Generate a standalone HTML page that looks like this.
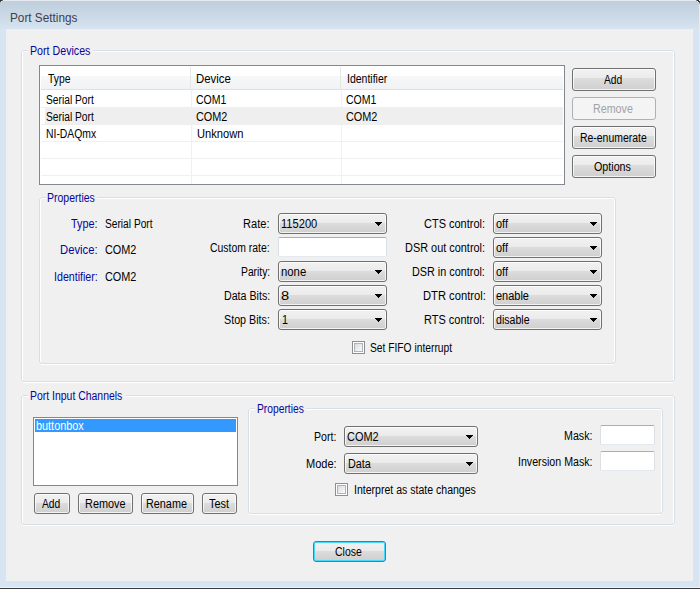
<!DOCTYPE html>
<html><head><meta charset="utf-8">
<style>
*{margin:0;padding:0;box-sizing:border-box}
html,body{width:700px;height:589px;overflow:hidden;background:#d7e4f1}
body{position:relative;font-family:"Liberation Sans",sans-serif;font-size:12px;color:#000}
.a{position:absolute}
.t{position:absolute;white-space:nowrap;transform-origin:0 0}
.btn{position:absolute;border:1px solid #707070;border-radius:3px;background:linear-gradient(#f2f2f2 0%,#ebebeb 45%,#dddddd 45%,#cfcfcf 100%);box-shadow:inset 0 0 0 1px rgba(255,255,255,.75)}
.btn.dis{border-color:#adb2b5;background:#f4f4f4;box-shadow:none}
.btn.def{border-color:#3c7fb1;box-shadow:inset 0 0 0 1px #48d8fb}
.cmb{position:absolute;border:1px solid #707070;border-radius:3px;background:linear-gradient(#f2f2f2 0%,#ebebeb 45%,#dddddd 45%,#cfcfcf 100%);box-shadow:inset 0 0 0 1px rgba(255,255,255,.75)}
.cmb .ar{position:absolute;right:4px;top:8px;width:0;height:0;border-left:3.5px solid transparent;border-right:3.5px solid transparent;border-top:4px solid #000}
.tb{position:absolute;background:#fff;border:1px solid #dbdfe6;border-top-color:#abadb3;border-bottom-color:#e3e9ef;border-radius:2px}
.chk{position:absolute;width:13px;height:13px;border:1px solid #8e8f8f;background:#fff}
.chk i{position:absolute;left:1px;top:1px;width:9px;height:9px;border:1px solid #aeb3b9;background:linear-gradient(135deg,#d8dbe1,#fbfbfb)}
</style></head><body>
<div class="a" style="left:0px;top:0px;width:700px;height:1px;background:#e6e9ef;"></div>
<div class="a" style="left:0px;top:1px;width:699px;height:28px;background:linear-gradient(#bfcedc,#d6e3f0);"></div>
<div class="a" style="left:699px;top:0px;width:1px;height:588px;background:#e8ebf0;"></div>
<div class="a" style="left:0px;top:587px;width:700px;height:1px;background:#eef4fc;"></div>
<div class="a" style="left:0px;top:588px;width:700px;height:1px;background:#3b3b3b;"></div>
<div class="a" style="left:0px;top:0px;width:2px;height:1px;background:#333;"></div>
<div class="a" style="left:2px;top:0px;width:1px;height:1px;background:#777;"></div>
<div class="a" style="left:0px;top:1px;width:1px;height:1px;background:#444;"></div>
<div class="a" style="left:0px;top:2px;width:1px;height:1px;background:#bbb;"></div>
<div class="a" style="left:1px;top:1px;width:1px;height:1px;background:#dde8f2;"></div>
<div class="a" style="left:696px;top:0px;width:1px;height:1px;background:#888;"></div>
<div class="a" style="left:697px;top:0px;width:2px;height:1px;background:#333;"></div>
<div class="a" style="left:699px;top:0px;width:1px;height:1px;background:#eee;"></div>
<div class="a" style="left:698px;top:1px;width:2px;height:1px;background:#333;"></div>
<div class="a" style="left:699px;top:2px;width:1px;height:1px;background:#555;"></div>
<div class="a" style="left:699px;top:3px;width:1px;height:1px;background:#aaa;"></div>
<div class="a" style="left:697px;top:1px;width:1px;height:1px;background:#dde8f2;"></div>
<div class="a" style="left:698px;top:2px;width:1px;height:1px;background:#dde8f2;"></div>
<div class="a" style="left:6px;top:29px;width:687px;height:552px;background:#f0f0f0;"></div>
<div class="a" style="left:21px;top:52px;width:1px;height:328px;background:#d5dfe5;"></div>
<div class="a" style="left:22px;top:52px;width:1px;height:328px;background:#ffffff;"></div>
<div class="a" style="left:673px;top:52px;width:1px;height:328px;background:#ffffff;"></div>
<div class="a" style="left:674px;top:52px;width:1px;height:328px;background:#d5dfe5;"></div>
<div class="a" style="left:23px;top:50px;width:650px;height:1px;background:#d5dfe5;"></div>
<div class="a" style="left:23px;top:51px;width:650px;height:1px;background:#ffffff;"></div>
<div class="a" style="left:23px;top:381px;width:650px;height:1px;background:#d5dfe5;"></div>
<div class="a" style="left:23px;top:382px;width:650px;height:1px;background:#ffffff;"></div>
<div class="a" style="left:22px;top:51px;width:1px;height:1px;background:#d5dfe5;"></div>
<div class="a" style="left:673px;top:51px;width:1px;height:1px;background:#d5dfe5;"></div>
<div class="a" style="left:22px;top:380px;width:1px;height:1px;background:#d5dfe5;"></div>
<div class="a" style="left:673px;top:380px;width:1px;height:1px;background:#d5dfe5;"></div>
<div class="a" style="left:28px;top:48px;width:65px;height:6px;background:#f0f0f0;"></div>
<div class="a" style="left:39px;top:65px;width:526px;height:120px;border:1px solid #828790;background:#fff"></div>
<div class="a" style="left:41px;top:76px;width:522px;height:13px;background:linear-gradient(#f7f8fa,#f1f2f4);"></div>
<div class="a" style="left:41px;top:89px;width:522px;height:1px;background:#dfe0e2;"></div>
<div class="a" style="left:190px;top:67px;width:1px;height:22px;background:#e6e6e8;"></div>
<div class="a" style="left:340px;top:67px;width:1px;height:22px;background:#e6e6e8;"></div>
<div class="a" style="left:45px;top:107px;width:518px;height:18px;background:#efefef;"></div>
<div class="a" style="left:41px;top:107px;width:4px;height:1px;background:#f0f0f0;"></div>
<div class="a" style="left:41px;top:124px;width:4px;height:1px;background:#f0f0f0;"></div>
<div class="a" style="left:41px;top:141px;width:522px;height:1px;background:#f0f0f0;"></div>
<div class="a" style="left:41px;top:158px;width:522px;height:1px;background:#f0f0f0;"></div>
<div class="a" style="left:41px;top:175px;width:522px;height:1px;background:#f0f0f0;"></div>
<div class="a" style="left:191px;top:90px;width:1px;height:94px;background:#f0f0f0;"></div>
<div class="a" style="left:341px;top:90px;width:1px;height:94px;background:#f0f0f0;"></div>
<div class="btn" style="left:572px;top:68px;width:84px;height:23px"></div>
<div class="btn dis" style="left:572px;top:97px;width:84px;height:23px"></div>
<div class="btn" style="left:572px;top:126px;width:84px;height:23px"></div>
<div class="btn" style="left:572px;top:155px;width:84px;height:23px"></div>
<div class="a" style="left:39px;top:199px;width:1px;height:163px;background:#d5dfe5;"></div>
<div class="a" style="left:40px;top:199px;width:1px;height:163px;background:#ffffff;"></div>
<div class="a" style="left:614px;top:199px;width:1px;height:163px;background:#ffffff;"></div>
<div class="a" style="left:615px;top:199px;width:1px;height:163px;background:#d5dfe5;"></div>
<div class="a" style="left:41px;top:197px;width:573px;height:1px;background:#d5dfe5;"></div>
<div class="a" style="left:41px;top:198px;width:573px;height:1px;background:#ffffff;"></div>
<div class="a" style="left:41px;top:363px;width:573px;height:1px;background:#d5dfe5;"></div>
<div class="a" style="left:41px;top:364px;width:573px;height:1px;background:#ffffff;"></div>
<div class="a" style="left:40px;top:198px;width:1px;height:1px;background:#d5dfe5;"></div>
<div class="a" style="left:614px;top:198px;width:1px;height:1px;background:#d5dfe5;"></div>
<div class="a" style="left:40px;top:362px;width:1px;height:1px;background:#d5dfe5;"></div>
<div class="a" style="left:614px;top:362px;width:1px;height:1px;background:#d5dfe5;"></div>
<div class="a" style="left:46px;top:195px;width:51px;height:6px;background:#f0f0f0;"></div>
<div class="cmb" style="left:278px;top:213px;width:109px;height:21px"></div>
<div class="a" style="left:375px;top:222px;width:7px;height:1px;background:#000;"></div>
<div class="a" style="left:376px;top:223px;width:5px;height:1px;background:#000;"></div>
<div class="a" style="left:377px;top:224px;width:3px;height:1px;background:#000;"></div>
<div class="a" style="left:378px;top:225px;width:1px;height:1px;background:#000;"></div>
<div class="cmb" style="left:493px;top:213px;width:109px;height:21px"></div>
<div class="a" style="left:590px;top:222px;width:7px;height:1px;background:#000;"></div>
<div class="a" style="left:591px;top:223px;width:5px;height:1px;background:#000;"></div>
<div class="a" style="left:592px;top:224px;width:3px;height:1px;background:#000;"></div>
<div class="a" style="left:593px;top:225px;width:1px;height:1px;background:#000;"></div>
<div class="tb" style="left:278px;top:237px;width:109px;height:20px"></div>
<div class="cmb" style="left:493px;top:237px;width:109px;height:21px"></div>
<div class="a" style="left:590px;top:246px;width:7px;height:1px;background:#000;"></div>
<div class="a" style="left:591px;top:247px;width:5px;height:1px;background:#000;"></div>
<div class="a" style="left:592px;top:248px;width:3px;height:1px;background:#000;"></div>
<div class="a" style="left:593px;top:249px;width:1px;height:1px;background:#000;"></div>
<div class="cmb" style="left:278px;top:261px;width:109px;height:21px"></div>
<div class="a" style="left:375px;top:270px;width:7px;height:1px;background:#000;"></div>
<div class="a" style="left:376px;top:271px;width:5px;height:1px;background:#000;"></div>
<div class="a" style="left:377px;top:272px;width:3px;height:1px;background:#000;"></div>
<div class="a" style="left:378px;top:273px;width:1px;height:1px;background:#000;"></div>
<div class="cmb" style="left:493px;top:261px;width:109px;height:21px"></div>
<div class="a" style="left:590px;top:270px;width:7px;height:1px;background:#000;"></div>
<div class="a" style="left:591px;top:271px;width:5px;height:1px;background:#000;"></div>
<div class="a" style="left:592px;top:272px;width:3px;height:1px;background:#000;"></div>
<div class="a" style="left:593px;top:273px;width:1px;height:1px;background:#000;"></div>
<div class="cmb" style="left:278px;top:285px;width:109px;height:21px"></div>
<div class="a" style="left:375px;top:294px;width:7px;height:1px;background:#000;"></div>
<div class="a" style="left:376px;top:295px;width:5px;height:1px;background:#000;"></div>
<div class="a" style="left:377px;top:296px;width:3px;height:1px;background:#000;"></div>
<div class="a" style="left:378px;top:297px;width:1px;height:1px;background:#000;"></div>
<div class="cmb" style="left:493px;top:285px;width:109px;height:21px"></div>
<div class="a" style="left:590px;top:294px;width:7px;height:1px;background:#000;"></div>
<div class="a" style="left:591px;top:295px;width:5px;height:1px;background:#000;"></div>
<div class="a" style="left:592px;top:296px;width:3px;height:1px;background:#000;"></div>
<div class="a" style="left:593px;top:297px;width:1px;height:1px;background:#000;"></div>
<div class="cmb" style="left:278px;top:309px;width:109px;height:21px"></div>
<div class="a" style="left:375px;top:318px;width:7px;height:1px;background:#000;"></div>
<div class="a" style="left:376px;top:319px;width:5px;height:1px;background:#000;"></div>
<div class="a" style="left:377px;top:320px;width:3px;height:1px;background:#000;"></div>
<div class="a" style="left:378px;top:321px;width:1px;height:1px;background:#000;"></div>
<div class="cmb" style="left:493px;top:309px;width:109px;height:21px"></div>
<div class="a" style="left:590px;top:318px;width:7px;height:1px;background:#000;"></div>
<div class="a" style="left:591px;top:319px;width:5px;height:1px;background:#000;"></div>
<div class="a" style="left:592px;top:320px;width:3px;height:1px;background:#000;"></div>
<div class="a" style="left:593px;top:321px;width:1px;height:1px;background:#000;"></div>
<div class="chk" style="left:352px;top:341px"><i></i></div>
<div class="a" style="left:21px;top:397px;width:1px;height:126px;background:#d5dfe5;"></div>
<div class="a" style="left:22px;top:397px;width:1px;height:126px;background:#ffffff;"></div>
<div class="a" style="left:673px;top:397px;width:1px;height:126px;background:#ffffff;"></div>
<div class="a" style="left:674px;top:397px;width:1px;height:126px;background:#d5dfe5;"></div>
<div class="a" style="left:23px;top:395px;width:650px;height:1px;background:#d5dfe5;"></div>
<div class="a" style="left:23px;top:396px;width:650px;height:1px;background:#ffffff;"></div>
<div class="a" style="left:23px;top:524px;width:650px;height:1px;background:#d5dfe5;"></div>
<div class="a" style="left:23px;top:525px;width:650px;height:1px;background:#ffffff;"></div>
<div class="a" style="left:22px;top:396px;width:1px;height:1px;background:#d5dfe5;"></div>
<div class="a" style="left:673px;top:396px;width:1px;height:1px;background:#d5dfe5;"></div>
<div class="a" style="left:22px;top:523px;width:1px;height:1px;background:#d5dfe5;"></div>
<div class="a" style="left:673px;top:523px;width:1px;height:1px;background:#d5dfe5;"></div>
<div class="a" style="left:28px;top:393px;width:98px;height:6px;background:#f0f0f0;"></div>
<div class="a" style="left:33px;top:417px;width:205px;height:69px;border:1px solid #828790;background:#fff"></div>
<div class="a" style="left:35px;top:419px;width:201px;height:13px;background:#3399ff;"></div>
<div class="btn" style="left:34px;top:493px;width:36px;height:21px"></div>
<div class="btn" style="left:78px;top:493px;width:55px;height:21px"></div>
<div class="btn" style="left:141px;top:493px;width:53px;height:21px"></div>
<div class="btn" style="left:202px;top:493px;width:35px;height:21px"></div>
<div class="a" style="left:248px;top:410px;width:1px;height:102px;background:#d5dfe5;"></div>
<div class="a" style="left:249px;top:410px;width:1px;height:102px;background:#ffffff;"></div>
<div class="a" style="left:661px;top:410px;width:1px;height:102px;background:#ffffff;"></div>
<div class="a" style="left:662px;top:410px;width:1px;height:102px;background:#d5dfe5;"></div>
<div class="a" style="left:250px;top:408px;width:411px;height:1px;background:#d5dfe5;"></div>
<div class="a" style="left:250px;top:409px;width:411px;height:1px;background:#ffffff;"></div>
<div class="a" style="left:250px;top:513px;width:411px;height:1px;background:#d5dfe5;"></div>
<div class="a" style="left:250px;top:514px;width:411px;height:1px;background:#ffffff;"></div>
<div class="a" style="left:249px;top:409px;width:1px;height:1px;background:#d5dfe5;"></div>
<div class="a" style="left:661px;top:409px;width:1px;height:1px;background:#d5dfe5;"></div>
<div class="a" style="left:249px;top:512px;width:1px;height:1px;background:#d5dfe5;"></div>
<div class="a" style="left:661px;top:512px;width:1px;height:1px;background:#d5dfe5;"></div>
<div class="a" style="left:255px;top:406px;width:51px;height:6px;background:#f0f0f0;"></div>
<div class="cmb" style="left:344px;top:426px;width:134px;height:21px"></div>
<div class="a" style="left:466px;top:435px;width:7px;height:1px;background:#000;"></div>
<div class="a" style="left:467px;top:436px;width:5px;height:1px;background:#000;"></div>
<div class="a" style="left:468px;top:437px;width:3px;height:1px;background:#000;"></div>
<div class="a" style="left:469px;top:438px;width:1px;height:1px;background:#000;"></div>
<div class="cmb" style="left:344px;top:453px;width:134px;height:21px"></div>
<div class="a" style="left:466px;top:462px;width:7px;height:1px;background:#000;"></div>
<div class="a" style="left:467px;top:463px;width:5px;height:1px;background:#000;"></div>
<div class="a" style="left:468px;top:464px;width:3px;height:1px;background:#000;"></div>
<div class="a" style="left:469px;top:465px;width:1px;height:1px;background:#000;"></div>
<div class="chk" style="left:335px;top:483px"><i></i></div>
<div class="tb" style="left:600px;top:425px;width:55px;height:20px"></div>
<div class="tb" style="left:600px;top:451px;width:55px;height:20px"></div>
<div class="btn def" style="left:313px;top:541px;width:73px;height:21px"></div>
<div class="t" style="left:10.29px;top:10px;font-size:13px;line-height:15px;color:#404050;transform:scaleX(0.9055)">Port Settings</div>
<div class="t" style="left:29.61px;top:44px;font-size:12px;line-height:14px;color:#06069a;transform:scaleX(0.8881)">Port Devices</div>
<div class="t" style="left:47.90px;top:72px;font-size:12px;line-height:14px;transform:scaleX(0.8615)">Type</div>
<div class="t" style="left:196.15px;top:72px;font-size:12px;line-height:14px;transform:scaleX(0.9486)">Device</div>
<div class="t" style="left:346.53px;top:72px;font-size:12px;line-height:14px;transform:scaleX(0.8733)">Identifier</div>
<div class="t" style="left:46.25px;top:93px;font-size:12px;line-height:14px;transform:scaleX(0.8527)">Serial Port</div>
<div class="t" style="left:196.12px;top:93px;font-size:12px;line-height:14px;transform:scaleX(0.8788)">COM1</div>
<div class="t" style="left:346.12px;top:93px;font-size:12px;line-height:14px;transform:scaleX(0.8788)">COM1</div>
<div class="t" style="left:46.25px;top:110px;font-size:12px;line-height:14px;transform:scaleX(0.8527)">Serial Port</div>
<div class="t" style="left:196.09px;top:110px;font-size:12px;line-height:14px;transform:scaleX(0.9061)">COM2</div>
<div class="t" style="left:346.09px;top:110px;font-size:12px;line-height:14px;transform:scaleX(0.9061)">COM2</div>
<div class="t" style="left:46.24px;top:127px;font-size:12px;line-height:14px;transform:scaleX(0.8649)">NI-DAQmx</div>
<div class="t" style="left:196.67px;top:127px;font-size:12px;line-height:14px;transform:scaleX(0.9271)">Unknown</div>
<div class="t" style="left:604.20px;top:73px;font-size:12px;line-height:14px;transform:scaleX(0.8571)">Add</div>
<div class="t" style="left:592.71px;top:102px;font-size:12px;line-height:14px;color:#a2a2a8;transform:scaleX(0.8930)">Remove</div>
<div class="t" style="left:579.73px;top:131px;font-size:12px;line-height:14px;transform:scaleX(0.8693)">Re-enumerate</div>
<div class="t" style="left:593.91px;top:160px;font-size:12px;line-height:14px;transform:scaleX(0.8925)">Options</div>
<div class="t" style="left:47.43px;top:191px;font-size:12px;line-height:14px;color:#06069a;transform:scaleX(0.8736)">Properties</div>
<div class="t" style="left:71.20px;top:217px;font-size:12px;line-height:14px;color:#06069a;transform:scaleX(0.9000)">Type:</div>
<div class="t" style="left:105.45px;top:217px;font-size:12px;line-height:14px;transform:scaleX(0.8491)">Serial Port</div>
<div class="t" style="left:59.76px;top:243px;font-size:12px;line-height:14px;color:#06069a;transform:scaleX(0.9395)">Device:</div>
<div class="t" style="left:104.89px;top:243px;font-size:12px;line-height:14px;transform:scaleX(0.9061)">COM2</div>
<div class="t" style="left:53.81px;top:270px;font-size:12px;line-height:14px;color:#06069a;transform:scaleX(0.8872)">Identifier:</div>
<div class="t" style="left:104.89px;top:270px;font-size:12px;line-height:14px;transform:scaleX(0.9061)">COM2</div>
<div class="t" style="left:243.28px;top:217px;font-size:12px;line-height:14px;transform:scaleX(0.9222)">Rate:</div>
<div class="t" style="left:210.03px;top:241px;font-size:12px;line-height:14px;transform:scaleX(0.8687)">Custom rate:</div>
<div class="t" style="left:240.74px;top:265px;font-size:12px;line-height:14px;transform:scaleX(0.8594)">Parity:</div>
<div class="t" style="left:223.81px;top:289px;font-size:12px;line-height:14px;transform:scaleX(0.8880)">Data Bits:</div>
<div class="t" style="left:224.41px;top:313px;font-size:12px;line-height:14px;transform:scaleX(0.8939)">Stop Bits:</div>
<div class="t" style="left:281.37px;top:217px;font-size:12px;line-height:14px;transform:scaleX(0.9263)">115200</div>
<div class="t" style="left:280.76px;top:265px;font-size:12px;line-height:14px;transform:scaleX(0.9440)">none</div>
<div class="t" style="left:281.08px;top:289px;font-size:12px;line-height:14px;transform:scaleX(1.2200)">8</div>
<div class="t" style="left:282.00px;top:313px;font-size:12px;line-height:14px;transform:scaleX(0.9000)">1</div>
<div class="t" style="left:424.18px;top:217px;font-size:12px;line-height:14px;transform:scaleX(0.9154)">CTS control:</div>
<div class="t" style="left:405.49px;top:241px;font-size:12px;line-height:14px;transform:scaleX(0.9093)">DSR out control:</div>
<div class="t" style="left:412.40px;top:265px;font-size:12px;line-height:14px;transform:scaleX(0.9025)">DSR in control:</div>
<div class="t" style="left:423.07px;top:289px;font-size:12px;line-height:14px;transform:scaleX(0.9323)">DTR control:</div>
<div class="t" style="left:424.18px;top:313px;font-size:12px;line-height:14px;transform:scaleX(0.9154)">RTS control:</div>
<div class="t" style="left:495.59px;top:217px;font-size:12px;line-height:14px;transform:scaleX(0.9083)">off</div>
<div class="t" style="left:495.59px;top:241px;font-size:12px;line-height:14px;transform:scaleX(0.9083)">off</div>
<div class="t" style="left:495.59px;top:265px;font-size:12px;line-height:14px;transform:scaleX(0.9083)">off</div>
<div class="t" style="left:495.59px;top:289px;font-size:12px;line-height:14px;transform:scaleX(0.9143)">enable</div>
<div class="t" style="left:495.62px;top:313px;font-size:12px;line-height:14px;transform:scaleX(0.8811)">disable</div>
<div class="t" style="left:370.45px;top:341px;font-size:12px;line-height:14px;transform:scaleX(0.8547)">Set FIFO interrupt</div>
<div class="t" style="left:30.13px;top:389px;font-size:12px;line-height:14px;color:#06069a;transform:scaleX(0.8705)">Port Input Channels</div>
<div class="t" style="left:35.79px;top:419px;font-size:12px;line-height:14px;color:#fff;transform:scaleX(0.9059)">buttonbox</div>
<div class="t" style="left:42.00px;top:497px;font-size:12px;line-height:14px;transform:scaleX(0.8571)">Add</div>
<div class="t" style="left:84.59px;top:497px;font-size:12px;line-height:14px;transform:scaleX(0.9093)">Remove</div>
<div class="t" style="left:146.20px;top:497px;font-size:12px;line-height:14px;transform:scaleX(0.9023)">Rename</div>
<div class="t" style="left:208.70px;top:497px;font-size:12px;line-height:14px;transform:scaleX(0.9136)">Test</div>
<div class="t" style="left:257.04px;top:402px;font-size:12px;line-height:14px;color:#06069a;transform:scaleX(0.8566)">Properties</div>
<div class="t" style="left:313.92px;top:430px;font-size:12px;line-height:14px;transform:scaleX(0.8826)">Port:</div>
<div class="t" style="left:305.68px;top:457px;font-size:12px;line-height:14px;transform:scaleX(0.9194)">Mode:</div>
<div class="t" style="left:346.99px;top:430px;font-size:12px;line-height:14px;transform:scaleX(0.9121)">COM2</div>
<div class="t" style="left:347.70px;top:457px;font-size:12px;line-height:14px;transform:scaleX(0.9000)">Data</div>
<div class="t" style="left:354.42px;top:483px;font-size:12px;line-height:14px;transform:scaleX(0.8781)">Interpret as state changes</div>
<div class="t" style="left:563.71px;top:429px;font-size:12px;line-height:14px;transform:scaleX(0.8900)">Mask:</div>
<div class="t" style="left:517.71px;top:455px;font-size:12px;line-height:14px;transform:scaleX(0.8866)">Inversion Mask:</div>
<div class="t" style="left:334.83px;top:545px;font-size:12px;line-height:14px;transform:scaleX(0.8724)">Close</div>
</body></html>
